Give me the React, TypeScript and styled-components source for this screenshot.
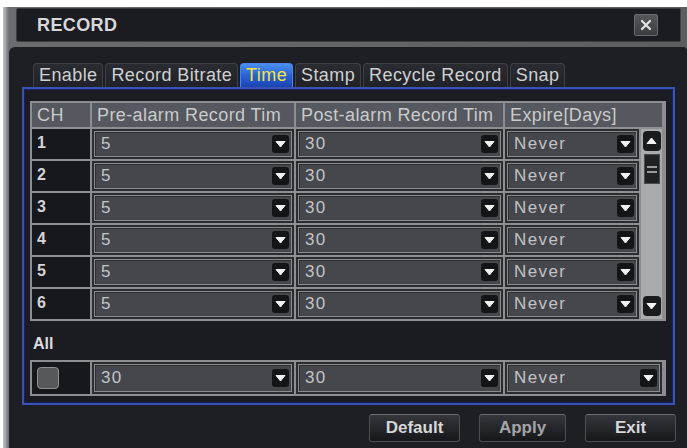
import React from "react";
import styled, { createGlobalStyle } from "styled-components";

const Global = createGlobalStyle`
  html, body { margin: 0; padding: 0; background: #ffffff; }
  body { font-family: "Liberation Sans", Arial, sans-serif; }
  * { box-sizing: border-box; }
`;

const Page = styled.div`
  width: 687px;
  height: 448px;
  padding: 7px 0 0 3px;
  overflow: hidden;
`;

const Window = styled.div`
  height: 441px;
  display: flex;
  flex-direction: column;
  background: linear-gradient(90deg, #c4c4c6 0px, #9a9b9e 3px, #6a6c70 6px, #5c5e62 100%);
  padding: 1px 0 0 6px;
`;

const TitleBar = styled.div`
  height: 34px;
  margin: 0 6px 0 7px;
  display: flex;
  align-items: center;
  justify-content: space-between;
  padding: 0 22px 0 20px;
  background: #1b1c21;
  border: 1px solid #3c3e43;
  border-radius: 2px;
`;

const Title = styled.span`
  color: #d8d8da;
  font-size: 18px;
  font-weight: bold;
  letter-spacing: 0.4px;
`;

const CloseButton = styled.div`
  width: 24px;
  height: 22px;
  display: flex;
  align-items: center;
  justify-content: center;
  background: linear-gradient(#55575b, #3a3c40);
  border: 1px solid #6a6c70;
  border-radius: 2px;
`;

const Body = styled.div`
  flex: 1;
  margin-top: 5px;
  background: #1d1f25;
  border-radius: 6px 4px 0 0;
  padding: 16px 12px 0 13px;
  display: flex;
  flex-direction: column;
`;

const Tabs = styled.div`
  display: flex;
  gap: 2px;
  padding-left: 11px;
  height: 24px;
`;

const Tab = styled.div<{ $active?: boolean }>`
  height: 24px;
  padding: 0 5px;
  display: flex;
  align-items: center;
  font-size: 18px;
  letter-spacing: 0.4px;
  white-space: nowrap;
  border: 1px solid ${(p) => (p.$active ? "#4a86e8" : "#3e4046")};
  border-bottom: none;
  border-radius: 4px 4px 0 0;
  color: ${(p) => (p.$active ? "#f2e63a" : "#cfd0d2")};
  background: ${(p) =>
    p.$active
      ? "linear-gradient(#4a8ef0 0%, #2a62d4 50%, #1a44b0 100%)"
      : "linear-gradient(#2a2c31, #1f2126)"};
`;

const Frame = styled.div`
  border: 2px solid #3a52b4;
  box-shadow: inset 0 0 0 1px #172060;
  background: #1a1c21;
  padding: 12px 7px 7px 6px;
  display: flex;
  flex-direction: column;
`;

const Grid = styled.div`
  display: grid;
  grid-template-columns: 58px 202px 207px 134px 21px;
  grid-template-rows: 24px repeat(6, 30px);
  gap: 2px;
  padding: 2px;
  background: #8c8e92;
`;

const HeadCell = styled.div<{ $span?: number }>`
  grid-column: span ${(p) => p.$span ?? 1};
  background: #55585e;
  color: #c9cacc;
  font-size: 18px;
  letter-spacing: 0.4px;
  padding-left: 5px;
  display: flex;
  align-items: center;
  white-space: nowrap;
  overflow: hidden;
`;

const ChCell = styled.div`
  background: #17181d;
  color: #d4d4d6;
  font-size: 16px;
  font-weight: bold;
  padding: 0 0 3px 5px;
  display: flex;
  align-items: center;
`;

const SelectCell = styled.div`
  background: #2a2c31;
  padding: 2px;
  display: flex;
`;

const Select = styled.div`
  flex: 1;
  display: flex;
  align-items: center;
  justify-content: space-between;
  background: #45474c;
  border: 1px solid #8a8c90;
  box-shadow: inset 1px 1px 0 #2c2e32;
  padding: 0 2px 0 6px;
  color: #c2c3c5;
  font-size: 17px;
  letter-spacing: 1.4px;
`;

const ArrowBox = styled.div`
  width: 17px;
  height: 18px;
  border-radius: 3px;
  background: #141519;
  display: flex;
  align-items: center;
  justify-content: center;
`;

const ScrollTrack = styled.div`
  grid-column: 5;
  grid-row: 2 / span 6;
  background: #a9aaac;
  display: flex;
  flex-direction: column;
  align-items: center;
  padding: 2px 0 3px;
`;

const ScrollButton = styled.div`
  width: 18px;
  height: 20px;
  border-radius: 4px;
  background: #1a1b1f;
  display: flex;
  align-items: center;
  justify-content: center;
`;

const ScrollThumb = styled.div`
  width: 16px;
  height: 30px;
  margin-top: 3px;
  background: #202125;
  border: 1px solid #4a4b4f;
  display: flex;
  flex-direction: column;
  justify-content: center;
  gap: 3px;
  padding: 0 2px;
  flex: none;
  & > span { height: 2px; background: #9a9b9e; }
`;

const Spacer = styled.div`
  flex: 1;
`;

const AllLabel = styled.div`
  color: #dcdcde;
  font-size: 16px;
  font-weight: bold;
  height: 39px;
  padding-top: 14px;
  padding-left: 3px;
`;

const AllRow = styled.div`
  display: grid;
  grid-template-columns: 58px 202px 207px 157px;
  gap: 2px;
  padding: 2px;
  height: 36px;
  background: #8c8e92;
`;

const CheckCell = styled.div`
  background: #17181d;
  display: flex;
  align-items: center;
  padding-left: 5px;
`;

const CheckBox = styled.div`
  width: 22px;
  height: 22px;
  border-radius: 4px;
  background: #56585c;
  border: 1px solid #8e9094;
`;

const Footer = styled.div`
  display: flex;
  justify-content: flex-end;
  gap: 19px;
  padding: 9px 0 0;
  margin-right: -1px;
`;

const Button = styled.div<{ $w: number; $dim?: boolean }>`
  width: ${(p) => p.$w}px;
  height: 28px;
  display: flex;
  align-items: center;
  justify-content: center;
  background: linear-gradient(#34363b, #16171b);
  border: 1px solid #4c4e52;
  border-top-color: #6a6c70;
  border-radius: 3px;
  color: ${(p) => (p.$dim ? "#a4a5a8" : "#d6d7d9")};
  font-size: 17px;
  font-weight: bold;
`;

const DownArrow = () => (
  <svg width="11" height="8" viewBox="0 0 11 8">
    <path d="M1 1.5 H10 L5.5 7 Z" fill="#f2f2f2" stroke="#f2f2f2" strokeWidth="1" strokeLinejoin="round" />
  </svg>
);

const UpArrow = () => (
  <svg width="11" height="8" viewBox="0 0 11 8">
    <path d="M1 6.5 H10 L5.5 1 Z" fill="#f2f2f2" stroke="#f2f2f2" strokeWidth="1" strokeLinejoin="round" />
  </svg>
);

const Dropdown = ({ value }: { value: string }) => (
  <Select>
    <span>{value}</span>
    <ArrowBox>
      <DownArrow />
    </ArrowBox>
  </Select>
);

const tabs = ["Enable", "Record Bitrate", "Time", "Stamp", "Recycle Record", "Snap"];
const channels = ["1", "2", "3", "4", "5", "6"];

export default function App() {
  return (
    <>
      <Global />
      <Page>
        <Window>
          <TitleBar>
            <Title>RECORD</Title>
            <CloseButton>
              <svg width="12" height="12" viewBox="0 0 12 12">
                <path d="M2 2 L10 10 M10 2 L2 10" stroke="#e4e4e6" strokeWidth="2.2" strokeLinecap="round" />
              </svg>
            </CloseButton>
          </TitleBar>
          <Body>
            <Tabs>
              {tabs.map((t) => (
                <Tab key={t} $active={t === "Time"}>
                  {t}
                </Tab>
              ))}
            </Tabs>
            <Frame>
              <Grid>
                <HeadCell>CH</HeadCell>
                <HeadCell>Pre-alarm Record Tim</HeadCell>
                <HeadCell>Post-alarm Record Tim</HeadCell>
                <HeadCell $span={2}>Expire[Days]</HeadCell>
                {channels.map((ch, i) => (
                  <React.Fragment key={ch}>
                    <ChCell style={{ gridRow: i + 2 }}>{ch}</ChCell>
                    <SelectCell style={{ gridRow: i + 2 }}>
                      <Dropdown value="5" />
                    </SelectCell>
                    <SelectCell style={{ gridRow: i + 2 }}>
                      <Dropdown value="30" />
                    </SelectCell>
                    <SelectCell style={{ gridRow: i + 2 }}>
                      <Dropdown value="Never" />
                    </SelectCell>
                  </React.Fragment>
                ))}
                <ScrollTrack>
                  <ScrollButton>
                    <UpArrow />
                  </ScrollButton>
                  <ScrollThumb>
                    <span />
                    <span />
                  </ScrollThumb>
                  <Spacer />
                  <ScrollButton>
                    <DownArrow />
                  </ScrollButton>
                </ScrollTrack>
              </Grid>
              <AllLabel>All</AllLabel>
              <AllRow>
                <CheckCell>
                  <CheckBox />
                </CheckCell>
                <SelectCell>
                  <Dropdown value="30" />
                </SelectCell>
                <SelectCell>
                  <Dropdown value="30" />
                </SelectCell>
                <SelectCell>
                  <Dropdown value="Never" />
                </SelectCell>
              </AllRow>
            </Frame>
            <Footer>
              <Button $w={91}>Default</Button>
              <Button $w={87} $dim>
                Apply
              </Button>
              <Button $w={91}>Exit</Button>
            </Footer>
          </Body>
        </Window>
      </Page>
    </>
  );
}
